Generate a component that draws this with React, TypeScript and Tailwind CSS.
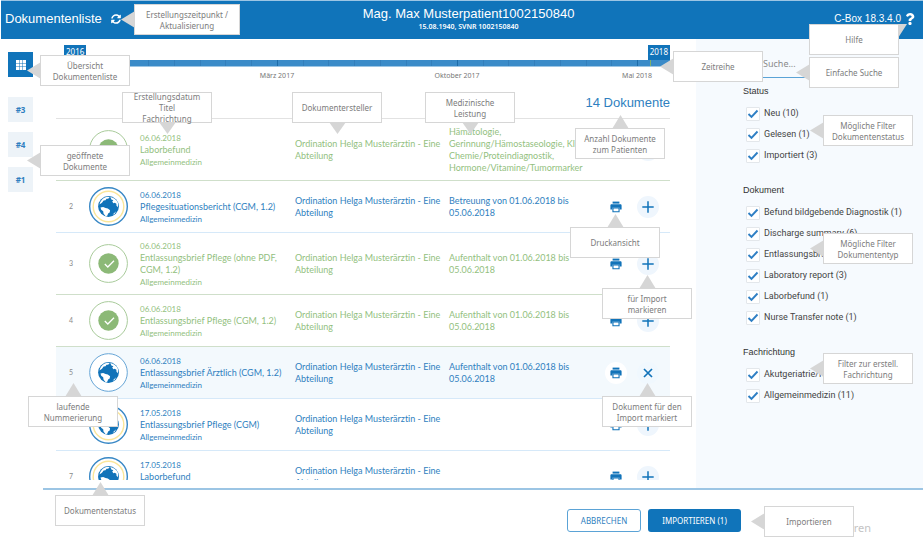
import type { ReactNode } from 'react';
import clsx from 'clsx';
import { FaQuestion, FaSyncAlt } from 'react-icons/fa';

type DocStatus = 'imported' | 'new' | 'marked';

interface DocumentEntry {
  nr: number;
  status: DocStatus;
  date: string;
  title: string;
  department: string;
  creator: string;
  service: string;
  tall?: boolean;
}

const CREATOR = 'Ordination Helga Musterärztin - Eine Abteilung';

const DOCUMENTS: DocumentEntry[] = [
  {
    nr: 1,
    status: 'imported',
    date: '06.06.2018',
    title: 'Laborbefund',
    department: 'Allgemeinmedizin',
    creator: CREATOR,
    service: 'Hämatologie,\nGerinnung/Hämostaseologie, Klin.\nChemie/Proteindiagnostik,\nHormone/Vitamine/Tumormarker',
    tall: true,
  },
  { nr: 2, status: 'new', date: '06.06.2018', title: 'Pflegesituationsbericht (CGM, 1.2)', department: 'Allgemeinmedizin', creator: CREATOR, service: 'Betreuung von 01.06.2018 bis\n05.06.2018' },
  { nr: 3, status: 'imported', date: '06.06.2018', title: 'Entlassungsbrief Pflege (ohne PDF, CGM, 1.2)', department: 'Allgemeinmedizin', creator: CREATOR, service: 'Aufenthalt von 01.06.2018 bis\n05.06.2018', tall: true },
  { nr: 4, status: 'imported', date: '06.06.2018', title: 'Entlassungsbrief Pflege (CGM, 1.2)', department: 'Allgemeinmedizin', creator: CREATOR, service: 'Aufenthalt von 01.06.2018 bis\n05.06.2018' },
  { nr: 5, status: 'marked', date: '06.06.2018', title: 'Entlassungsbrief Ärztlich (CGM, 1.2)', department: 'Allgemeinmedizin', creator: CREATOR, service: 'Aufenthalt von 01.06.2018 bis\n05.06.2018' },
  { nr: 6, status: 'new', date: '17.05.2018', title: 'Entlassungsbrief Pflege (CGM)', department: 'Allgemeinmedizin', creator: CREATOR, service: '' },
  { nr: 7, status: 'new', date: '17.05.2018', title: 'Laborbefund', department: 'Allgemeinmedizin', creator: CREATOR, service: '' },
];

const FILTERS = [
  { title: 'Status', options: ['Neu (10)', 'Gelesen (1)', 'Importiert (3)'] },
  {
    title: 'Dokument',
    options: [
      'Befund bildgebende Diagnostik (1)',
      'Discharge summary (6)',
      'Entlassungsbrief (2)',
      'Laboratory report (3)',
      'Laborbefund (1)',
      'Nurse Transfer note (1)',
    ],
  },
  { title: 'Fachrichtung', options: ['Akutgeriatrie/R (3)', 'Allgemeinmedizin (11)'] },
];

const TEXT_CLASSES: Record<DocStatus, string> = {
  imported: 'text-[#93bf80]',
  new: 'text-[#2f7fc0]',
  marked: 'text-[#2f7fc0]',
};

const LINE_CLASSES: Record<DocStatus, string> = {
  imported: '*:border-[#cfdfca]',
  new: '*:border-[#d6e9f9]',
  marked: '*:border-[#d6e9f9]',
};

type ArrowSide = 'left' | 'up' | 'down' | 'corner';

const ARROWS: Record<ArrowSide, { className: string; width: number; height: number; points: string }> = {
  left: { className: 'right-full top-[6px]', width: 14, height: 17, points: '14,0 0,8.5 14,17' },
  up: { className: 'bottom-full left-[36px]', width: 17, height: 14, points: '0,14 8.5,0 17,14' },
  down: { className: 'top-full left-[36px]', width: 17, height: 12, points: '0,0 8.5,12 17,0' },
  corner: { className: 'left-full -top-px', width: 9, height: 14, points: '0,0 9,0 0,14' },
};

const CALLOUTS: { lines: string[]; arrow: ArrowSide; className: string }[] = [
  { lines: ['Erstellungszeitpunkt /', 'Aktualisierung'], arrow: 'left', className: 'left-[134px] top-[4px] w-[106px]' },
  { lines: ['Übersicht', 'Dokumentenliste'], arrow: 'left', className: 'left-[40px] top-[55px] w-[90px]' },
  { lines: ['Erstellungsdatum', 'Titel', 'Fachrichtung'], arrow: 'down', className: 'left-[122px] top-[92px] w-[90px]' },
  { lines: ['Dokumentersteller'], arrow: 'down', className: 'left-[292px] top-[92px] w-[90px]' },
  { lines: ['Medizinische', 'Leistung'], arrow: 'down', className: 'left-[425px] top-[92px] w-[90px]' },
  { lines: ['geöffnete', 'Dokumente'], arrow: 'left', className: 'left-[40px] top-[145px] w-[90px]' },
  { lines: ['laufende', 'Nummerierung'], arrow: 'up', className: 'left-[28px] top-[396px] w-[90px]' },
  { lines: ['Dokumentenstatus'], arrow: 'up', className: 'left-[55px] top-[495px] w-[90px]' },
  { lines: ['Anzahl Dokumente', 'zum Patienten'], arrow: 'up', className: 'right-[258px] top-[128px] w-[90px]' },
  { lines: ['Druckansicht'], arrow: 'up', className: 'right-[263px] top-[227px] w-[90px]' },
  { lines: ['für Import', 'markieren'], arrow: 'up', className: 'right-[231px] top-[288px] w-[90px]' },
  { lines: ['Dokument für den', 'Import markiert'], arrow: 'up', className: 'right-[231px] top-[396px] w-[90px]' },
  { lines: ['Zeitreihe'], arrow: 'left', className: 'right-[160px] top-[51px] w-[90px]' },
  { lines: ['Hilfe'], arrow: 'corner', className: 'right-[24px] top-[24px] w-[90px]' },
  { lines: ['Einfache Suche'], arrow: 'left', className: 'right-[24px] top-[57px] w-[90px]' },
  { lines: ['Mögliche Filter', 'Dokumentenstatus'], arrow: 'left', className: 'right-[10px] top-[115px] w-[90px]' },
  { lines: ['Mögliche Filter', 'Dokumententyp'], arrow: 'left', className: 'right-[10px] top-[233px] w-[90px]' },
  { lines: ['Filter zur erstell.', 'Fachrichtung'], arrow: 'left', className: 'right-[10px] top-[353px] w-[90px]' },
  { lines: ['Importieren'], arrow: 'left', className: 'right-[69px] top-[506px] w-[90px]' },
];

function Callout({ lines, arrow, className }: (typeof CALLOUTS)[number]) {
  const { className: arrowClass, width, height, points } = ARROWS[arrow];
  return (
    <div
      className={clsx(
        'absolute flex h-[31px] flex-col items-center justify-center border border-[#d6d6d6] bg-white text-center text-[8px] leading-[11px] whitespace-nowrap text-[#7c7c7c]',
        className,
      )}
    >
      {lines.map(line => (
        <p key={line}>{line}</p>
      ))}
      <svg className={clsx('absolute', arrowClass)} width={width} height={height} fill="#d6d6d6">
        <polygon points={points} />
      </svg>
    </div>
  );
}

function StatusIcon({ status }: { status: DocStatus }) {
  if (status === 'imported') {
    return (
      <svg width="39" height="39" viewBox="0 0 39 39" fill="none" role="img" aria-label="Importiert">
        <circle cx="19.5" cy="19.5" r="18.9" stroke="#a9cb9b" fill="#fff" />
        <circle cx="19.5" cy="19.5" r="10.2" fill="#8cb977" />
        <path d="M15.8 20l3 3 6.2-6.2" stroke="#fff" strokeWidth="1.3" />
      </svg>
    );
  }
  return (
    <svg width="39" height="39" viewBox="0 0 39 39" fill="none" role="img" aria-label="Neu">
      <circle cx="19.5" cy="19.5" r="18.8" stroke={status === 'new' ? '#3787c5' : '#66a5d6'} strokeWidth={status === 'new' ? 1.4 : 1} fill="#fff" />
      {status === 'new' && <circle cx="19.5" cy="19.5" r="15.3" stroke="#fbe69a" strokeWidth="1.4" />}
      <circle cx="19.5" cy="19.5" r="10.4" fill="#1173b9" />
      <g fill="#fff">
        <path d="M12.8 12.8c1.700-1.900 4-2.900 6.700-3l1.200.6-1.700 1.300-1.500.1-1 1.400-1.900.2-1.600 2.400-2.600 1.800c.4-1.800 1.200-3.400 2.400-4.800z" />
        <path d="M21.300 10.100c3.400.6 6.300 2.700 7.700 5.900l-.1 4.300-1.400-1.600-.1-2-1.600-.9-1.400.4-1.200-1.700 1.200-1.300-2-.7z" />
        <path d="M11.500 20.600l2.600-.6 2.500.9 2.200.5 2.300 1.800-.4 2.300-1.600 1.100-.7 1.900-1.600 1-2.300-2.900-.3-2.300-2-1.600z" />
        <path d="M23.500 27.800l3.600-3.600-1.300 2.500z" />
      </g>
    </svg>
  );
}

function PrintIcon() {
  return (
    <svg width="12" height="12" viewBox="0 0 12 12" fill="currentColor">
      <path d="M2.600.6h6.800v2H2.600z" />
      <path d="M1.600 3.200h8.800c.7 0 1.200.5 1.200 1.200v4H9.600V6.700H2.400v1.700H.4v-4c0-.7.500-1.200 1.200-1.200z" />
      <path fillRule="evenodd" d="M2.400 6.700h7.200v4.500H2.400zM3.500 7.400v2.900h5V7.400z" />
    </svg>
  );
}

function PlusIcon() {
  return (
    <svg width="12" height="12" viewBox="0 0 12 12" stroke="currentColor" strokeWidth="1.500">
      <path d="M6 .3v11.400M.3 6h11.400" />
    </svg>
  );
}

function CloseIcon() {
  return (
    <svg width="10" height="10" viewBox="0 0 10 10" stroke="currentColor" strokeWidth="1.700">
      <path d="M1 1l8 8M9 1l-8 8" />
    </svg>
  );
}

function RoundButton({ label, className, children }: { label: string; className?: string; children: ReactNode }) {
  return (
    <button type="button" aria-label={label} className={clsx('flex size-[22px] items-center justify-center rounded-full text-[#1173b9]', className)}>
      {children}
    </button>
  );
}

function DocumentRow({ doc }: { doc: DocumentEntry }) {
  const marked = doc.status === 'marked';
  return (
    <tr
      className={clsx(
        "font-['Lato',sans-serif] [font-variant-ligatures:none] *:border-b *:p-0 *:align-middle",
        doc.tall ? 'h-[62px]' : 'h-[52px]',
        marked && 'bg-[#f3f9fd]',
        TEXT_CLASSES[doc.status],
        LINE_CLASSES[doc.status],
      )}
    >
      <td className="text-center text-[7px] text-[#8a8a8a]">{doc.nr}</td>
      <td className="pl-[3px]!">
        <StatusIcon status={doc.status} />
      </td>
      <td className="pt-[2px]!">
        <p className="text-[8px] leading-3">{doc.date}</p>
        <p className="leading-3">{doc.title}</p>
        <p className="text-[8px] leading-[13px]">{doc.department}</p>
      </td>
      <td className="leading-3">{doc.creator}</td>
      <td className="leading-3 whitespace-pre">{doc.service}</td>
      <td>
        <div className="flex justify-end gap-[10px] pr-[11px]">
          <RoundButton label="Drucken" className={marked ? 'bg-white' : ''}>
            <PrintIcon />
          </RoundButton>
          {marked ? (
            <RoundButton label="Markierung entfernen" className="bg-[#f0f8fe]">
              <CloseIcon />
            </RoundButton>
          ) : (
            <RoundButton label="Für Import markieren" className="bg-[#eff6fd]">
              <PlusIcon />
            </RoundButton>
          )}
        </div>
      </td>
    </tr>
  );
}

function Timeline() {
  return (
    <div className="ml-2">
      <div className="flex h-[15px] items-start justify-between text-[8px] leading-[13px] text-white">
        <span className="h-full bg-[#1173b9] px-[2px]">2016</span>
        <span className="h-full bg-[#1173b9] px-[2px]">2018</span>
      </div>
      <div className="flex h-[7px] border-b border-[#9cc5e4] bg-[#3b8bc8]">
        <div className="w-2" />
        {Array.from({ length: 22 }, (_, i) => (
          <div key={i} className={clsx('flex-1 border-r', i % 7 === 0 ? 'border-[#1d6ca9]' : 'border-[#347fbb]')} />
        ))}
        <div className="w-8 pl-3">
          <div className="h-full w-px bg-[#7fb069]" />
        </div>
      </div>
      <div className="grid grid-cols-[123fr_180fr_180fr_123fr] text-[7px] leading-[18px] text-[#777]">
        <span className="col-start-2 text-center">März 2017</span>
        <span className="text-center">Oktober 2017</span>
        <span className="pr-[18px] text-right">Mai 2018</span>
      </div>
    </div>
  );
}

function FilterOption({ label }: { label: string }) {
  return (
    <label className="flex h-[21px] items-center gap-1 pl-[3px] font-['Roboto',sans-serif] text-[9px] whitespace-nowrap text-[#444]">
      <span className="grid size-[14px] *:[grid-area:1/1]">
        <input type="checkbox" defaultChecked className="peer size-[14px] appearance-none rounded-[1px] border border-[#e3e7eb] bg-white" />
        <svg viewBox="0 0 14 14" className="pointer-events-none invisible size-[14px] peer-checked:visible" fill="none" stroke="#2f7fc4" strokeWidth="1.900">
          <path d="M2.500 7l3 3 6-6.500" />
        </svg>
      </span>
      {label}
    </label>
  );
}

export default function App() {
  return (
    <div className="relative flex h-screen flex-col overflow-hidden bg-white font-['Noto_Sans',sans-serif] text-[9px]">
      {/* Header */}
      <header className="ml-px grid h-[39px] shrink-0 grid-cols-[1fr_auto_1fr] items-center border-t border-[#9cc5e4] bg-[#1074ba] pr-[7px] pl-1 font-['Liberation_Sans',sans-serif] text-white">
        <div className="flex items-center gap-[9px] pb-[3px]">
          <h1 className="text-[13px]">Dokumentenliste</h1>
          <button type="button" aria-label="Aktualisieren">
            <FaSyncAlt size={10} />
          </button>
        </div>
        <div className="pb-px pl-4 text-center">
          <h2 className="text-[13px] leading-[15px]">Mag. Max Musterpatient1002150840</h2>
          <p className="font-['Noto_Sans',sans-serif] text-[7px] leading-3 font-semibold">15.08.1940, SVNR 1002150840</p>
        </div>
        <div className="flex items-center justify-end gap-[3px] pb-[3px] text-[10px]">
          <span>C-Box 18.3.4.0</span>
          <button type="button" aria-label="Hilfe">
            <FaQuestion size={12} />
          </button>
        </div>
      </header>

      <div className="flex min-h-0 flex-1">
        {/* Opened documents */}
        <nav className="flex w-[43px] shrink-0 flex-col items-start gap-[10px] pt-[13px] pl-2 text-[8px] font-bold text-[#2f7fc0]">
          <button type="button" aria-label="Übersicht" className="mb-[10px] flex size-[25px] items-center justify-center bg-[#1074ba]">
            <svg width="10" height="10" viewBox="0 0 10 10" fill="#fff">
              {[0, 3.5, 7].map(y => [0, 3.5, 7].map(x => <rect key={`${x}-${y}`} x={x} y={y} width="3" height="3" />))}
            </svg>
          </button>
          <button type="button" className="size-[25px] bg-[#edf3f8]">#3</button>
          <button type="button" className="size-[25px] bg-[#edf3f8]">#4</button>
          <button type="button" className="size-[25px] bg-[#edf3f8]">#1</button>
        </nav>

        <div className="flex min-w-0 flex-1 flex-col">
          <div className="flex min-h-0 flex-1">
            <main className="flex min-w-0 flex-1 flex-col pt-[6px] pr-[26px] pb-2 pl-[13px]">
              <Timeline />
              <h2 className="h-[33px] pt-[10px] text-right font-['Liberation_Sans',sans-serif] text-[13px] leading-4 text-[#2f7fc0]">14 Dokumente</h2>
              <div className="min-h-0 flex-1 overflow-hidden border-t border-[#e2e2e2]">
                <table className="w-full table-fixed border-separate border-spacing-0">
                  <colgroup>
                    <col className="w-[30px]" />
                    <col className="w-[54px]" />
                    <col className="w-[155px]" />
                    <col className="w-[154px]" />
                    <col />
                    <col className="w-[70px]" />
                  </colgroup>
                  <tbody>
                    {DOCUMENTS.map(doc => (
                      <DocumentRow key={doc.nr} doc={doc} />
                    ))}
                  </tbody>
                </table>
              </div>
            </main>

            {/* Filters */}
            <aside className="w-[227px] shrink-0 bg-[#f6fafe] pt-[14px] pl-[47px]">
              <input
                type="search"
                aria-label="Suche"
                placeholder="Suche..."
                className="mb-[7px] block h-[25px] w-[156px] border-b border-[#5ba3d6] pb-1 pl-5 text-[9px] placeholder:text-[#8a8a8a]"
              />
              {FILTERS.map(group => (
                <fieldset key={group.title} className="mb-[18px]">
                  <legend className="mb-[6px] font-['Liberation_Sans',sans-serif] text-[9px] leading-3 text-[#333]">{group.title}</legend>
                  {group.options.map(option => (
                    <FilterOption key={option} label={option} />
                  ))}
                </fieldset>
              ))}
            </aside>
          </div>

          {/* Actions */}
          <footer className="flex h-[55px] shrink-0 items-center justify-end gap-[7px] border-t-2 border-[#9cc5e4] pt-[8px] pr-[52px]">
            <button type="button" className="h-[23px] w-[74px] rounded-[3px] border border-[#5ba3d6] text-[8px] text-[#2f7fc0]">ABBRECHEN</button>
            <button type="button" className="h-[23px] w-[93px] rounded-[3px] bg-[#1074ba] text-[8px] text-white">IMPORTIEREN (1)</button>
            <span className="w-[123px] pt-4 text-right text-[11px] text-[#c4c4c4]">ren</span>
          </footer>
        </div>
      </div>

      {/* Explanations */}
      {CALLOUTS.map(callout => (
        <Callout key={callout.className} {...callout} />
      ))}
    </div>
  );
}
